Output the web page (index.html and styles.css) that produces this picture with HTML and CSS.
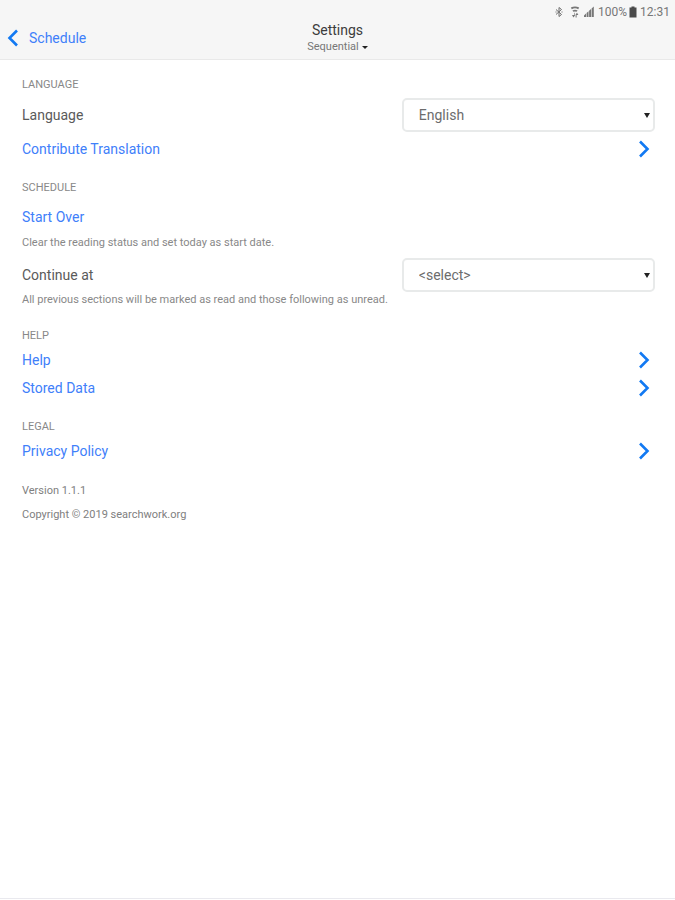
FILE: index.html
```html
<!DOCTYPE html>
<html lang="en">
<head>
    <meta charset="UTF-8">
    <meta name="viewport" content="width=device-width, initial-scale=1.0">
    <title>Settings</title>
    <link rel="stylesheet" href="styles.css">
</head>
<body>
    <header class="header">
        <!-- Status bar -->
        <div class="status">
            <svg class="bluetooth" width="10" height="12" viewBox="0 0 10 12"><path d="M2 3.5 L7.5 8.5 L5 10.5 V1.5 L7.5 3.5 L2 8.5 M1.5 6 H2.5 M7.5 6 H8.5"/></svg>
            <svg class="wifi" width="10" height="12" viewBox="0 0 10 12"><path d="M0.8 1.6 Q5 -0.4 9.2 1.6 L8.2 3.2 Q5 1.4 1.8 3.2 Z M2.4 4.4 Q5 3 7.6 4.4 L6.6 5.8 Q5 5 3.4 5.8 Z"/><path d="M2 9 H4.4 V6.8 H5 V9.6 L3.4 11.6 Z M5.6 11.4 V8.6 L7 6.8 L8.4 9 H6.6 V11.4 Z"/></svg>
            <svg class="signal" width="10" height="12" viewBox="0 0 10 12"><path d="M0 11 V9.5 L2 7.5 V11 Z M2.6 11 V7 L4.5 5.2 V11 Z M5.1 11 V4.8 L7 3 V11 Z M7.6 11 V2.5 L9.8 0.5 V11 Z"/></svg>
            <span>100%</span>
            <svg class="battery" width="8" height="12" viewBox="0 0 8 12"><path d="M2.5 0.5 H5.5 V1.5 H7.5 V11.5 H0.5 V1.5 H2.5 Z"/></svg>
            <span>12:31</span>
        </div>
        <nav class="navbar">
            <a class="back" href="#schedule">
                <svg width="12" height="18" viewBox="0 0 12 18"><path d="M10 1.5 L2.5 9 L10 16.5"/></svg>
                Schedule
            </a>
            <div class="heading">
                <h1>Settings</h1>
                <button class="plan" type="button">Sequential</button>
            </div>
        </nav>
    </header>

    <main class="content">
        <section>
            <h2>LANGUAGE</h2>
            <div class="field">
                <label for="language">Language</label>
                <div class="select">
                    <select id="language">
                        <option>English</option>
                    </select>
                </div>
            </div>
            <a class="row" href="#translate">
                Contribute Translation
                <svg width="12" height="18" viewBox="0 0 12 18"><path d="M2 1.5 L9.5 9 L2 16.5"/></svg>
            </a>
        </section>

        <section>
            <h2>SCHEDULE</h2>
            <button class="start-over" type="button">Start Over</button>
            <p class="note">Clear the reading status and set today as start date.</p>
            <div class="field">
                <label for="continue">Continue at</label>
                <div class="select">
                    <select id="continue">
                        <option>&lt;select&gt;</option>
                    </select>
                </div>
            </div>
            <p class="note">All previous sections will be marked as read and those following as unread.</p>
        </section>

        <section>
            <h2>HELP</h2>
            <a class="row" href="#help">
                Help
                <svg width="12" height="18" viewBox="0 0 12 18"><path d="M2 1.5 L9.5 9 L2 16.5"/></svg>
            </a>
            <a class="row" href="#data">
                Stored Data
                <svg width="12" height="18" viewBox="0 0 12 18"><path d="M2 1.5 L9.5 9 L2 16.5"/></svg>
            </a>
        </section>

        <section>
            <h2>LEGAL</h2>
            <a class="row" href="#privacy">
                Privacy Policy
                <svg width="12" height="18" viewBox="0 0 12 18"><path d="M2 1.5 L9.5 9 L2 16.5"/></svg>
            </a>
        </section>

        <section class="about">
            <p>Version 1.1.1</p>
            <p>Copyright © 2019 searchwork.org</p>
        </section>
    </main>

    <footer class="footer"></footer>
</body>
</html>
```
FILE: styles.css
```css
* {
    box-sizing: border-box;
}
body {
    display: flex;
    flex-direction: column;
    min-height: 100vh;
    margin: 0;
    font-family: Roboto, sans-serif;
    font-size: 14px;
    color: #5a5a5a;
    background-color: #fff;
}
h1, h2, p {
    margin: 0;
    font-weight: 400;
}
a {
    color: #3f80fa;
    text-decoration: none;
}
button {
    padding: 0;
    border: none;
    background: none;
    font-family: inherit;
    cursor: pointer;
}
svg {
    display: block;
    fill: none;
}

/* Header */
.header {
    background-color: #f6f6f6;
    border-bottom: 1px solid #e9e9e9;
}
.status {
    display: flex;
    align-items: center;
    justify-content: flex-end;
    height: 23px;
    padding-right: 5px;
    font-size: 12px;
    color: #777;
}
.status svg {
    fill: #777;
    margin-right: 4px;
}
.status .bluetooth {
    fill: none;
    stroke: #6c6c6c;
    margin-right: 6px;
}
.status .battery {
    fill: #4a4a4a;
    margin-left: 2px;
    margin-right: 3px;
}
.navbar {
    display: grid;
    grid-template-columns: 1fr auto 1fr;
    height: 36px;
}
.back {
    display: flex;
    align-items: center;
    gap: 10px;
    height: 30px;
    padding-left: 7px;
}
.back svg,
.row svg {
    stroke: #1279f2;
    stroke-width: 2.6;
}
.heading {
    text-align: center;
}
h1 {
    font-size: 14px;
    line-height: 14px;
    color: #3c3c3c;
}
.plan {
    display: flex;
    align-items: center;
    gap: 3px;
    font-size: 11px;
    line-height: 20px;
    color: #777;
}
.plan::after {
    content: "";
    border: 3px solid transparent;
    border-top-color: #222;
    border-bottom: none;
}

/* Settings */
.content {
    flex: 1;
    padding: 16px 20px 16px 22px;
}
section {
    margin-bottom: 16px;
}
h2 {
    margin-bottom: 2px;
    padding-top: 1px;
    font-size: 11px;
    line-height: 16px;
    color: #888;
}
.field {
    display: flex;
    align-items: center;
    justify-content: space-between;
    margin: 3px 0 1px;
    padding-top: 2px;
}
.field + .row {
    margin-top: 3px;
}
.select {
    position: relative;
    width: 40%;
}
.select::after {
    content: "";
    position: absolute;
    top: 15px;
    right: 5px;
    border: 3px solid transparent;
    border-top: 5px solid #222;
    border-bottom: none;
    pointer-events: none;
}
select {
    display: block;
    width: 100%;
    height: 34px;
    padding: 0 15px;
    border: 2px solid #e8eaea;
    border-radius: 5px;
    appearance: none;
    font-family: inherit;
    font-size: 14px;
    color: #6c6c6c;
    background-color: #fff;
}
.row {
    display: flex;
    align-items: center;
    justify-content: space-between;
    height: 28px;
    padding-right: 5px;
}
.start-over {
    display: block;
    height: 28px;
    margin: 7px 0 5px;
    font-size: 14px;
    color: #3f80fa;
}
.note {
    margin-bottom: 6px;
    font-size: 11px;
    line-height: 14px;
    color: #888;
}
.note:last-child {
    margin-bottom: 20px;
}
.about {
    padding-top: 2px;
}
.about p {
    margin-bottom: 8px;
    font-size: 11px;
    line-height: 16px;
    color: #808080;
}
.footer {
    height: 2px;
    border-top: 1px solid #e9e9ee;
}
```
